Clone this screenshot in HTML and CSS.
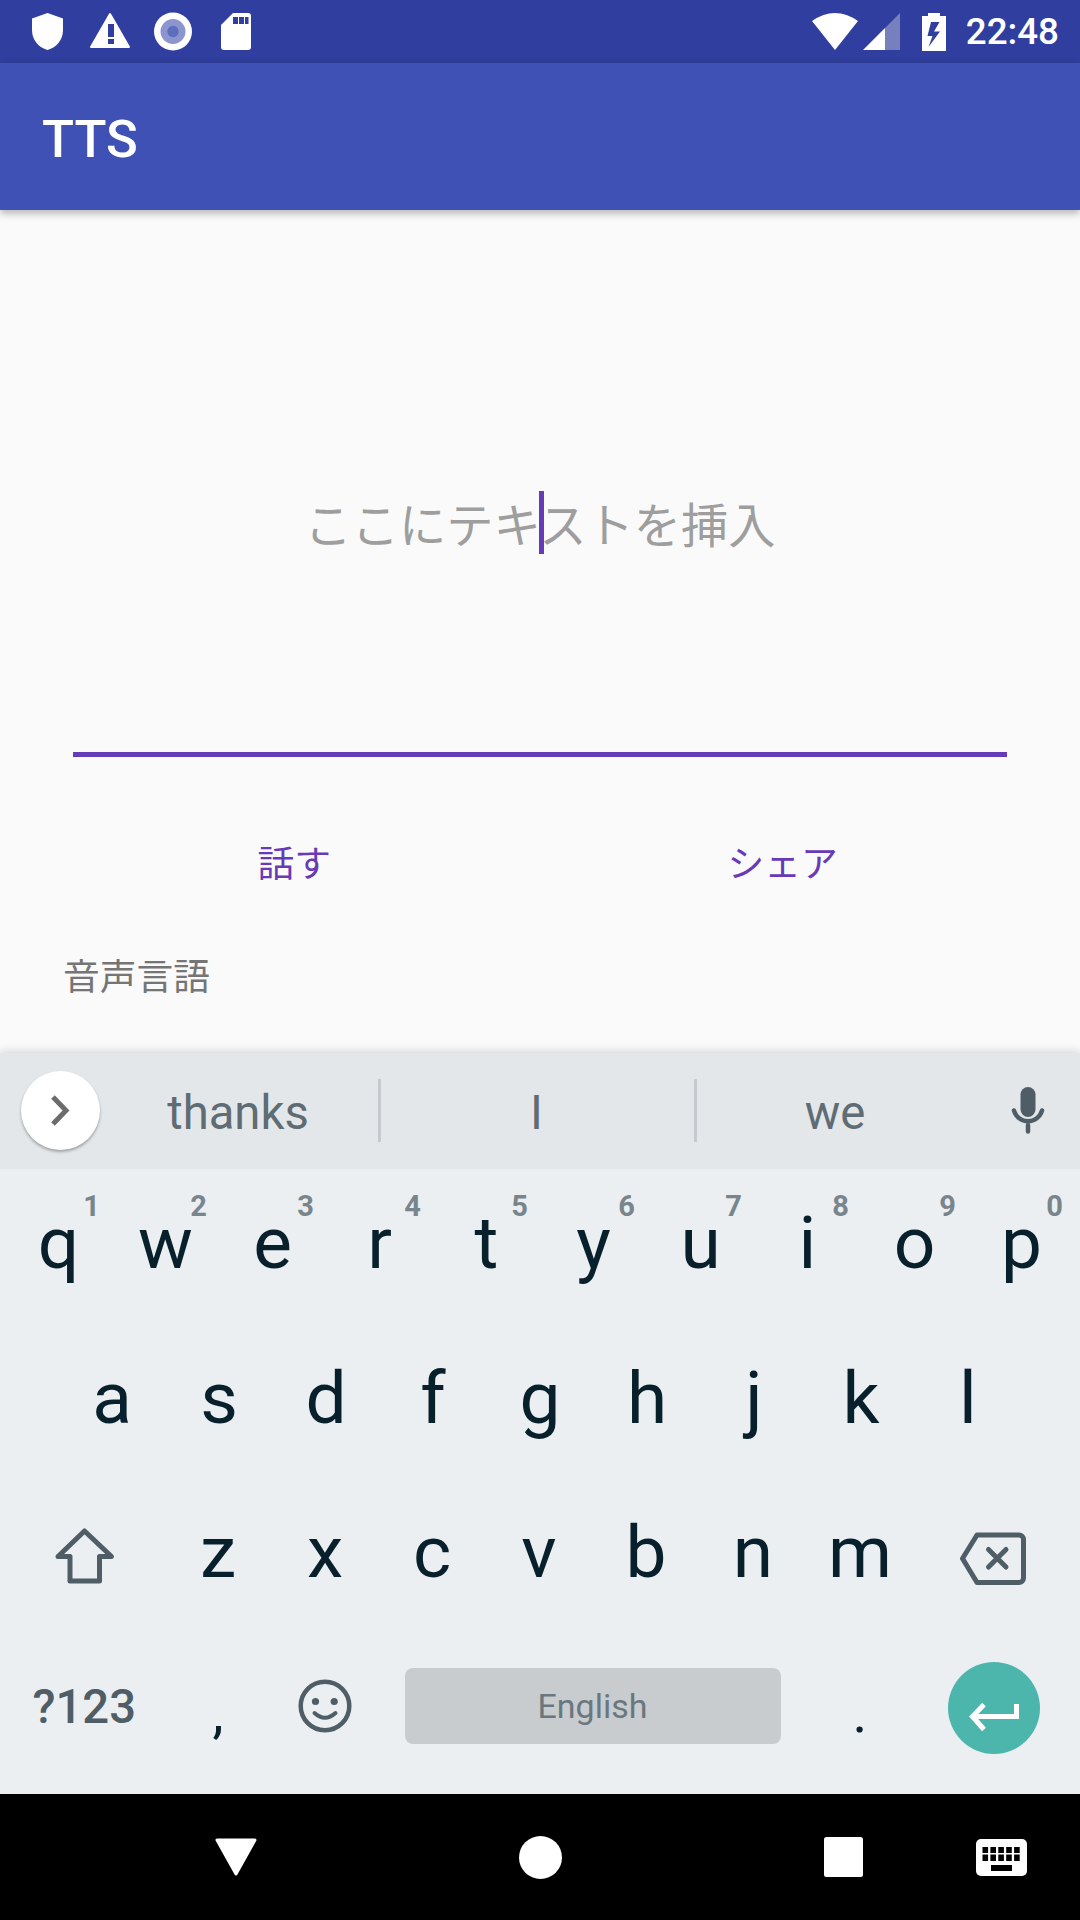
FILE: index.html
```html
<!DOCTYPE html>
<html lang="ja">
<head>
  <meta charset="UTF-8">
  <title>TTS</title>
  <link rel="stylesheet" href="styles.css">
</head>
<body>
<div class="screen">
  <div class="status">
    <div class="status-left">
      <!-- shield -->
      <svg class="st-icon" viewBox="0 0 63 63"><path fill="#fff" d="M31.5 13 47 18.500V30C47 40 40.500 47.500 31.500 50 22.500 47.500 16 40 16 30V18.500Z"/></svg>
      <!-- warning -->
      <svg class="st-icon" viewBox="0 0 63 63"><path fill="#fff" stroke="#fff" stroke-width="2" stroke-linejoin="round" d="M31 14 50 47H12Z"/><path fill="#303f9f" d="M29 24h6v13h-6zM29 39h6v5h-6z"/></svg>
      <!-- record -->
      <svg class="st-icon" viewBox="0 0 63 63"><circle cx="31" cy="31.500" r="19" fill="#fff"/><circle cx="31" cy="31.500" r="12.500" fill="#8c96ce"/><circle cx="31" cy="31.500" r="5.700" fill="#5f6dbd"/></svg>
      <!-- sd card -->
      <svg class="st-icon" viewBox="0 0 63 63"><path fill="#fff" d="M28 13H43a3 3 0 0 1 3 3V47a3 3 0 0 1-3 3H19a3 3 0 0 1-3-3V25Z"/><path fill="#303f9f" d="M28 17h5v7h-5zM34 17h5v7h-5zM40 17h3.500v7H40z"/></svg>
    </div>
    <div class="status-right">
      <svg class="wifi" viewBox="0 0 46 37"><path fill="#fff" d="M23 37 0 8Q23-8 46 8Z"/></svg>
      <svg class="signal" viewBox="0 0 37 37"><path fill="#7680bc" d="M37 0V37H22V15Z"/><path fill="#fff" d="M22 15V37H0Z"/></svg>
      <svg class="battery" viewBox="0 0 24 38"><path fill="#fff" d="M6 0H18V3H24V38H0V3H6Z"/><path fill="#303f9f" d="M9 9H17.500L12 18.500H18L6.500 34 10.500 23H5.500Z"/></svg>
      <span class="clock">22:48</span>
    </div>
  </div>

  <div class="appbar">TTS</div>

  <div class="main">
    <div class="editor">
      <span class="hint">ここにテキストを挿入</span>
      <i class="caret"></i>
    </div>
    <div class="actions">
      <button class="act">話す</button>
      <button class="act">シェア</button>
    </div>
    <div class="lang">音声言語</div>
  </div>

  <div class="keyboard">
    <div class="strip">
      <div class="more">
        <svg viewBox="0 0 79 79" width="79" height="79"><path fill="none" stroke="#6c6c6c" stroke-width="5" d="M32 26 45 39.500 32 53"/></svg>
      </div>
      <span class="sugg sugg-a">thanks</span>
      <span class="sep"></span>
      <span class="sugg sugg-b">I</span>
      <span class="sep"></span>
      <span class="sugg sugg-c">we</span>
      <div class="mic">
        <svg viewBox="0 0 34 47" width="34" height="47"><rect x="9.500" width="15" height="30" rx="7.500" fill="#4f5e66"/><path fill="none" stroke="#4f5e66" stroke-width="4.500" stroke-linecap="round" d="M3 23.500A14.500 14.500 0 0 0 31 23.500M17 38V44.500"/></svg>
      </div>
    </div>

    <div class="row">
      <div class="key">q<sup>1</sup></div>
      <div class="key">w<sup>2</sup></div>
      <div class="key">e<sup>3</sup></div>
      <div class="key">r<sup>4</sup></div>
      <div class="key">t<sup>5</sup></div>
      <div class="key">y<sup>6</sup></div>
      <div class="key">u<sup>7</sup></div>
      <div class="key">i<sup>8</sup></div>
      <div class="key">o<sup>9</sup></div>
      <div class="key">p<sup>0</sup></div>
    </div>
    <div class="row row-mid">
      <div class="key">a</div>
      <div class="key">s</div>
      <div class="key">d</div>
      <div class="key">f</div>
      <div class="key">g</div>
      <div class="key">h</div>
      <div class="key">j</div>
      <div class="key">k</div>
      <div class="key">l</div>
    </div>
    <div class="row row-low">
      <div class="key wide">
        <svg viewBox="0 0 63 63" width="63" height="63"><path fill="none" stroke="#4f5e66" stroke-width="5" stroke-linejoin="round" d="M31.500 10 58.500 35.500H46.500V60H17V35.500H5Z"/></svg>
      </div>
      <div class="key">z</div>
      <div class="key">x</div>
      <div class="key">c</div>
      <div class="key">v</div>
      <div class="key">b</div>
      <div class="key">n</div>
      <div class="key">m</div>
      <div class="key wide">
        <svg viewBox="0 0 70 70" width="70" height="70"><path fill="none" stroke="#4f5e66" stroke-width="5" stroke-linejoin="round" d="M18 18H60a4.500 4.500 0 0 1 4.500 4.500V61a4.500 4.500 0 0 1-4.500 4.500H18L3.500 41.500Z"/><path fill="none" stroke="#4f5e66" stroke-width="5" stroke-linecap="round" d="M29.500 32.500 47 50M47 32.500 29.500 50"/></svg>
      </div>
    </div>
    <div class="row row-low">
      <div class="key wide sym">?123</div>
      <div class="key punct">,</div>
      <div class="key">
        <svg viewBox="0 0 60 60" width="60" height="60"><circle cx="30" cy="29" r="24.300" fill="none" stroke="#4f5e66" stroke-width="4.500"/><circle cx="20.500" cy="24.500" r="3.600" fill="#4f5e66"/><circle cx="39.200" cy="24.500" r="3.600" fill="#4f5e66"/><path fill="none" stroke="#4f5e66" stroke-width="4" stroke-linecap="round" d="M19.500 36Q30 45.500 40.500 36"/></svg>
      </div>
      <div class="key space"><span>English</span></div>
      <div class="key punct">.</div>
      <div class="key wide">
        <div class="enter">
          <svg viewBox="0 0 92 92" width="92" height="92"><path fill="none" stroke="#fff" stroke-width="5" d="M68.500 35V47.500H25M36 35.500 24.500 47.500 36 60.500"/></svg>
        </div>
      </div>
    </div>
  </div>

  <div class="nav">
    <svg class="nav-back" viewBox="0 0 42 38" width="42" height="38"><path fill="#fff" stroke="#fff" stroke-width="3" stroke-linejoin="round" d="M2 2H40L21 36Z"/></svg>
    <svg class="nav-home" viewBox="0 0 43 43" width="43" height="43"><circle cx="21.500" cy="21.500" r="21.500" fill="#fff"/></svg>
    <svg class="nav-recent" viewBox="0 0 39 40" width="39" height="40"><rect width="39" height="40" rx="2.500" fill="#fff"/></svg>
    <svg class="nav-kbd" viewBox="0 0 51 37" width="51" height="37">
      <rect width="51" height="37" rx="5" fill="#fff"/>
      <path fill="#000" d="M6.500 8h5.600v6H6.500zM14.400 8H20v6h-5.600zM22.300 8h5.600v6h-5.600zM30.200 8h5.600v6h-5.600zM38.100 8h5.600v6h-5.600zM6.500 15.500h5.600v6.500H6.500zM14.400 15.500H20v6.500h-5.600zM22.300 15.500h5.600v6.500h-5.600zM30.200 15.500h5.600v6.500h-5.600zM38.100 15.500h5.600v6.500h-5.600zM15 26h21v6H15z"/>
    </svg>
  </div>
</div>
</body>
</html>
```

FILE: styles.css
```css
*{
  margin: 0;
  padding: 0;
  box-sizing: border-box;
}
body{
  font-family: Roboto, "Noto Sans CJK JP", sans-serif;
  background: #fafafa;
}
.screen{
  width: 1080px;
  height: 1920px;
  display: flex;
  flex-direction: column;
  overflow: hidden;
}

/* status bar */
.status{
  height: 63px;
  flex: none;
  background: #303f9f;
  display: flex;
  justify-content: space-between;
  align-items: center;
  padding: 0 21px 0 16px;
}
.status-left,
.status-right{
  display: flex;
  align-items: center;
}
.st-icon{
  width: 63px;
  height: 63px;
}
.wifi{
  width: 46px;
  height: 37px;
}
.signal{
  width: 37px;
  height: 37px;
  margin-left: 5px;
}
.battery{
  width: 24px;
  height: 38px;
  margin-left: 22px;
}
.clock{
  margin-left: 20px;
  color: #fff;
  font-size: 36.750px;
  font-weight: 500;
}

/* app bar */
.appbar{
  height: 147px;
  flex: none;
  background: #3f51b5;
  color: #fff;
  font-size: 52.500px;
  font-weight: 500;
  line-height: 152px;
  padding-left: 42px;
  box-shadow: 0 3px 8px rgba(0,0,0,.3);
  position: relative;
}

/* text field and buttons */
.main{
  flex: 1;
  min-height: 0;
}
.editor{
  height: 465px;
  margin: 82px 73px 0;
  border-bottom: 5px solid #673ab7;
  display: flex;
  align-items: center;
  justify-content: center;
  position: relative;
}
.hint{
  font-size: 47.250px;
  color: #9e9e9e;
}
.caret{
  position: absolute;
  left: 466px;
  top: 199px;
  width: 5px;
  height: 63px;
  background: #673ab7;
}
.actions{
  display: flex;
  padding: 0 53px 0 50px;
  margin-top: 81px;
}
.act{
  flex: 1;
  border: 0;
  background: none;
  font-family: inherit;
  font-size: 36.750px;
  line-height: 54px;
  color: #673ab7;
}
.lang{
  margin: 59px 0 0 63px;
  font-size: 36.750px;
  line-height: 54px;
  color: #757575;
}

/* keyboard */
.keyboard{
  height: 741px;
  flex: none;
  background: #ebeff2;
  box-shadow: 0 -2px 8px rgba(0,0,0,.14);
  position: relative;
}
.strip{
  height: 116px;
  background: #e3e7ea;
  display: flex;
  align-items: center;
}
.more{
  width: 79px;
  height: 79px;
  margin: -2px 0 0 21px;
  border-radius: 50%;
  background: #fff;
  box-shadow: 0 2px 3px rgba(0,0,0,.3);
}
.sugg{
  font-size: 47.250px;
  color: #5f6c73;
  text-align: center;
  padding-top: 4px;
}
.sugg-a{
  width: 276px;
  margin-right: 2px;
}
.sugg-b{
  width: 311px;
  margin-right: 2px;
}
.sugg-c{
  width: 276px;
}
.sep{
  width: 3px;
  height: 63px;
  margin-top: -2px;
  background: #c5cace;
}
.mic{
  margin: -2px 0 0 38px;
  display: flex;
}
.row{
  display: grid;
  grid-template-columns: repeat(20, 53.500px);
  height: 154.500px;
  padding-left: 5px;
}
.row-mid{
  padding-left: 58.500px;
}
.row-low{
  padding-left: 4px;
}
.key{
  grid-column: span 2;
  height: 148px;
  display: flex;
  align-items: center;
  justify-content: center;
  font-size: 73px;
  line-height: 148px;
  color: #07202c;
  position: relative;
}
.key.wide{
  grid-column: span 3;
}
.key.punct{
  font-size: 56px;
  padding-top: 12px;
}
.key sup{
  position: absolute;
  top: 15px;
  right: 12px;
  font-size: 29px;
  line-height: 44px;
  font-weight: 700;
  color: #78858c;
}
.key.sym{
  font-size: 47.250px;
  font-weight: 500;
  color: #4f5e66;
}
.key.space{
  grid-column: span 8;
}
.key.space span{
  width: 376px;
  height: 76px;
  margin-top: -2px;
  border-radius: 8px;
  background: #c8cccf;
  font-size: 34px;
  line-height: 76px;
  color: #6b777e;
  text-align: center;
}
.enter{
  width: 92px;
  height: 92px;
  margin-top: 2px;
  border-radius: 50%;
  background: #4db6ac;
}

/* navigation bar */
.nav{
  height: 126px;
  flex: none;
  background: #000;
  display: flex;
  align-items: center;
  padding-left: 215px;
}
.nav-home{
  margin-left: 262px;
}
.nav-recent{
  margin-left: 262px;
}
.nav-kbd{
  margin-left: 113px;
}
```
